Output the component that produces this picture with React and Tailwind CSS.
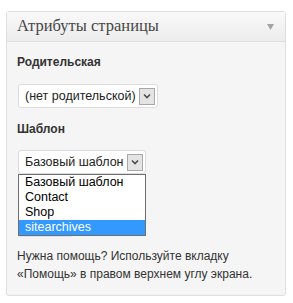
import React from 'react';

const sans = { fontFamily: '"Liberation Sans", Arial, sans-serif' };

function Arrow() {
  return (
    <span className="ml-auto flex h-[17px] w-[16px] shrink-0 items-center justify-center border border-[#a8a8a8] bg-[#e4e4e4]">
      <svg width="8" height="6" viewBox="0 0 8 6">
        <path d="M1 1.5 L4 4.5 L7 1.5" fill="none" stroke="#4d4d4d" strokeWidth="1.6" />
      </svg>
    </span>
  );
}

export default function App() {
  const items = ['Базовый шаблон', 'Contact', 'Shop', 'sitearchives'];
  return (
    <div className="min-h-[303px] w-[293px] bg-white pl-[6px] pt-[11px]" style={sans}>
      <div className="h-[285px] w-[280px] rounded-[3px] border border-[#dfdfdf] bg-[#f5f5f5]">
        <div className="flex h-[30px] items-center border-b border-[#dfdfdf] bg-gradient-to-b from-[#f9f9f9] to-[#ececec] pl-[10px] pr-[11px]">
          <span className="text-[16.5px] leading-none text-[#464646]" style={{ fontFamily: '"Liberation Serif", Georgia, serif' }}>
            Атрибуты страницы
          </span>
          <svg className="ml-auto" width="7" height="6" viewBox="0 0 7 6">
            <path d="M0 0 H7 L3.5 6 Z" fill="#a3a3a3" />
          </svg>
        </div>
        <div className="px-[10px] pt-[13px] text-[#333]">
          <p className="text-[12px] font-bold leading-[14px]">Родительская</p>
          <div className="mt-[15px] ml-[1px] flex h-[24px] w-[140px] items-center rounded-[3px] border border-[#dcdcdc] bg-white pl-[6px] pr-[2px] text-[12.5px] text-[#222]">
            <span className="whitespace-nowrap">(нет родительской)</span>
            <Arrow />
          </div>
          <p className="mt-[14px] text-[12px] font-bold leading-[14px]">Шаблон</p>
          <div className="relative mt-[14px] ml-[1px]">
            <div className="flex h-[24px] w-[128px] items-center rounded-[3px] border border-[#dcdcdc] bg-white pl-[6px] pr-[2px] text-[12.5px] text-[#222]">
              <span className="whitespace-nowrap">Базовый шаблон</span>
              <Arrow />
            </div>
            <div className="absolute left-0 top-[82px] h-[5px] w-[55px] rounded-b-[3px] border-x border-b border-[#e2e2e2]" />
            <div className="absolute left-0 top-[24px] w-[128px] border border-[#6f6f6f] bg-white text-[12.5px] text-black">
              {items.map((it, i) => (
                <div
                  key={it}
                  className={
                    i === 3
                      ? 'h-[15px] whitespace-nowrap bg-[#3399ff] pl-[6px] leading-[15px] text-white'
                      : 'h-[15px] whitespace-nowrap pl-[6px] leading-[15px]'
                  }
                >
                  {it}
                </div>
              ))}
            </div>
          </div>
          <p className="mt-[73px] text-[12px] leading-[18px] text-[#333]">
            Нужна помощь? Используйте вкладку «Помощь» в правом верхнем углу экрана.
          </p>
        </div>
      </div>
    </div>
  );
}
